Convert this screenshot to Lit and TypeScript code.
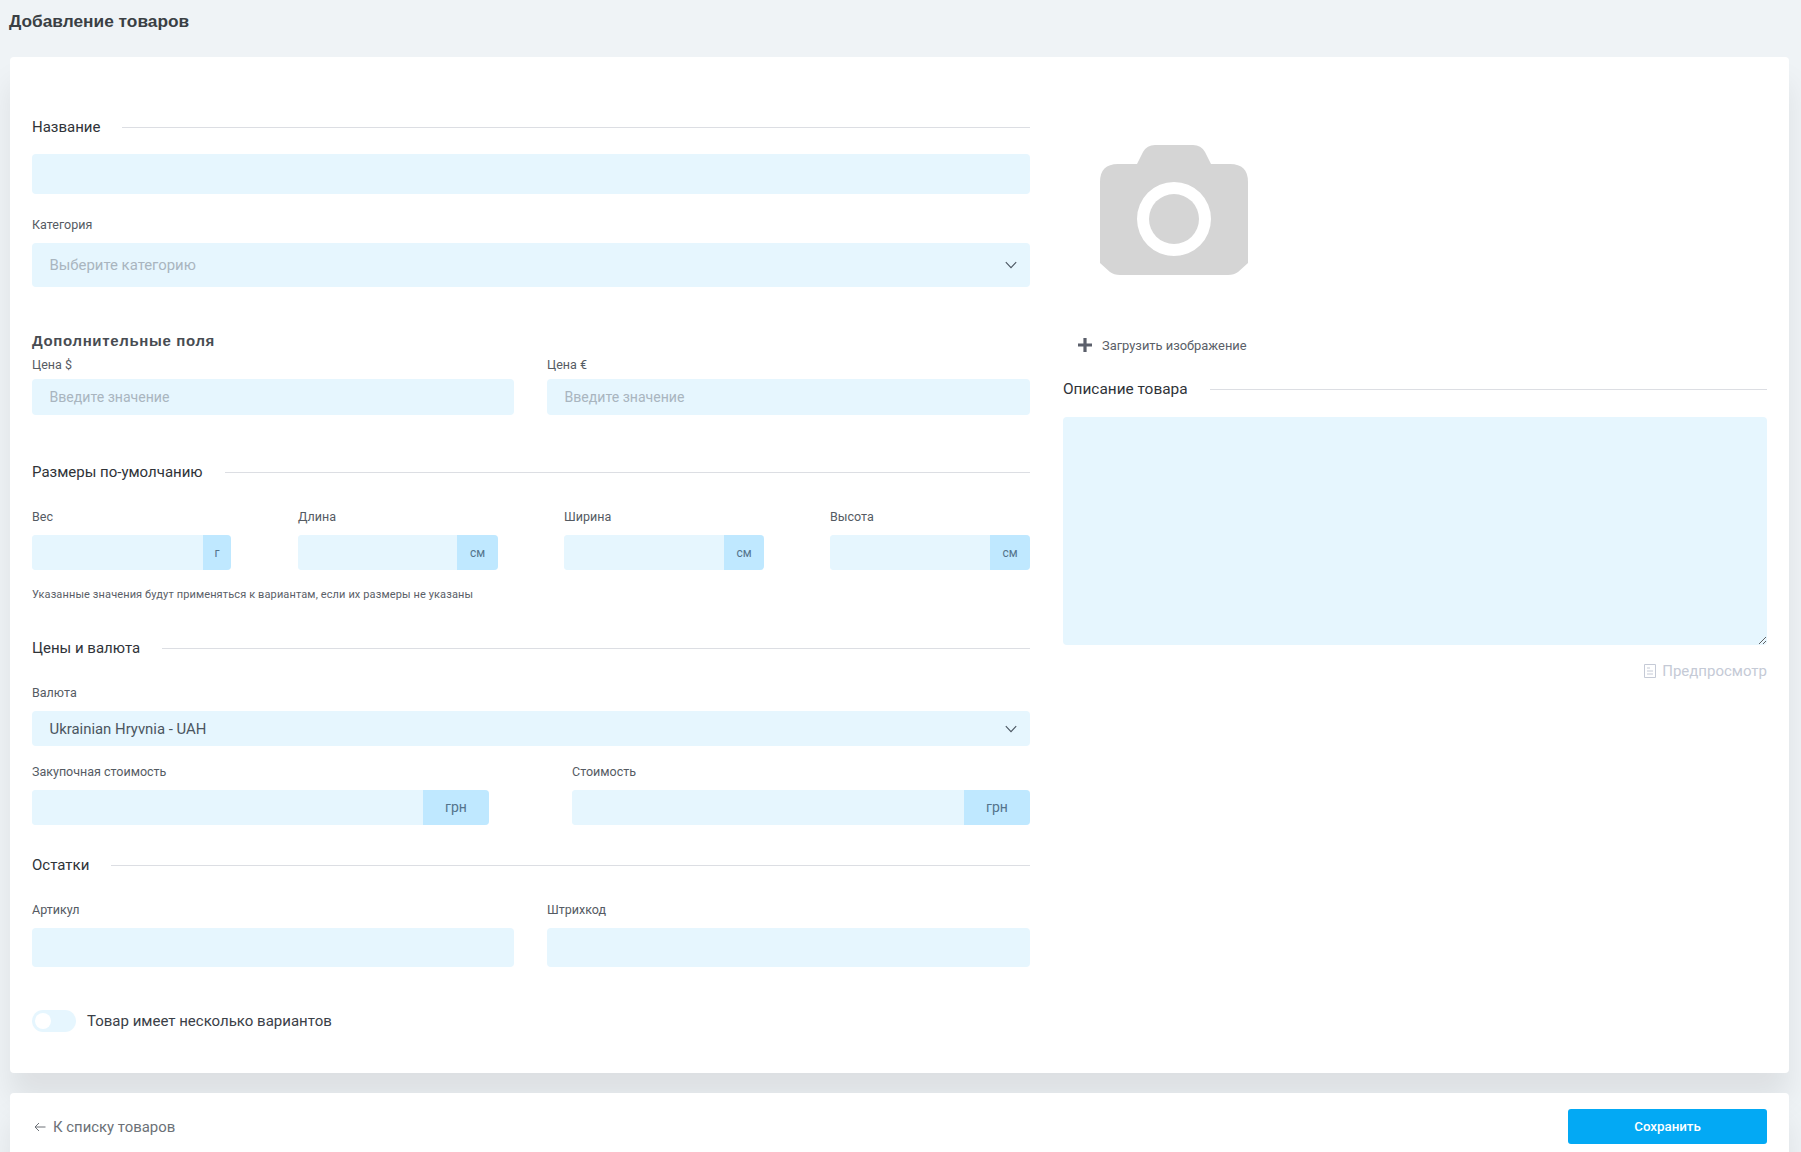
import { LitElement, html, css, svg } from "lit";
import { customElement } from "lit/decorators.js";

const chevron = html`<svg class="chev" width="12" height="8" viewBox="0 0 12 8"><path d="M.8 1.2 6 6.600l5.200-5.400" fill="none" stroke="#4a5560" stroke-width="1.1"/></svg>`;

@customElement("app-root")
export class AppRoot extends LitElement {
  static styles = css`
    :host { display: block; width: 1801px; height: 1152px; overflow: hidden; background: #eff3f6; font-family: Roboto, "Liberation Sans", sans-serif; color: #343a40; }
    * { box-sizing: border-box; }
    .title { height: 57px; margin: 0; padding: 12px 0 0 9px; font: 700 17.300px/19px "Liberation Sans", Arial, sans-serif; color: #3a3f44; }
    .card { margin: 0 12px 20px 10px; background: #fff; border-radius: 4px; box-shadow: 0 26px 30px rgba(0,0,0,.08); }
    .main { height: 1016px; padding: 60px 22px 0; display: flex; gap: 33px; }
    .left { flex: 0 0 998px; display: flex; flex-direction: column; }
    .right { flex: 1; display: flex; flex-direction: column; }
    .heading { display: flex; align-items: center; gap: 22px; height: 20px; font-size: 15px; line-height: 20px; color: #2f3338; white-space: nowrap; }
    .heading::after { content: ""; flex: 1; height: 1px; background: #dcdee3; }
    .label { display: block; height: 16px; font-size: 12.500px; line-height: 16px; color: #555b63; margin-bottom: 11px; }
    input, textarea, .select { display: block; width: 100%; border: 0; outline: 0; background: #e6f6fe; border-radius: 4px; font: 14.100px Roboto, "Liberation Sans", sans-serif; color: #4a5560; padding: 0 17.500px; }
    input::placeholder { color: #a9b5bf; opacity: 1; }
    .select { display: flex; align-items: center; justify-content: space-between; padding-right: 13px; font-size: 14.900px; }
    .select.ph { color: #a9b5bf; }
    .chev { flex: none; }
    .group { display: flex; height: 35px; border-radius: 4px; overflow: hidden; background: #e6f6fe; }
    .group input { flex: 1; min-width: 0; height: 100%; border-radius: 0; }
    .addon { flex: none; background: #bfe8ff; color: #54748c; display: flex; align-items: center; justify-content: center; font-size: 12px; }
    .w28 { width: 28px; } .w41 { width: 41px; } .w40 { width: 40px; }
    .w66 { width: 66px; font-size: 14px; padding-bottom: 2px; }
    .h40 { height: 40px; } .h44 { height: 44px; } .h36 { height: 36px; } .h35 { height: 35px; } .h39 { height: 39px; }
    .bold { font: 700 15px/16px "Liberation Sans", Arial, sans-serif; letter-spacing: .65px; height: 16px; color: #484c52; margin: 46px 0 8px; }
    .two { display: grid; grid-template-columns: 482px 483px; gap: 33px; }
    .two .label { margin-bottom: 6px; }
    .four { display: grid; grid-template-columns: 199px 201px 200px 200px; column-gap: 66px; margin-top: 27px; }
    .four .label { margin-bottom: 10px; }
    .four > :nth-child(2) { margin-left: 1px; }
    .cost { display: grid; grid-template-columns: 457px 458px; gap: 83px; margin-top: 18px; }
    .cost .label { margin-bottom: 10px; }
    .stock { display: grid; grid-template-columns: 482px 483px; gap: 33px; margin-top: 27px; }
    .stock .label { margin-bottom: 10px; }
    .note { font-size: 11px; line-height: 14px; letter-spacing: .12px; color: #5a6068; margin-top: 18px; }
    .toggle-row { display: flex; align-items: center; gap: 11px; margin-top: 43px; height: 22px; font-size: 15px; color: #3a4047; }
    .toggle { width: 44px; height: 22px; border-radius: 11px; background: #e6f6fe; padding: 3px; flex: none; }
    .toggle span { display: block; width: 16px; height: 16px; border-radius: 50%; background: #fff; }
    .camera { display: block; margin: 28px 0 0 37px; }
    .upload { display: flex; align-items: center; margin: 60px 0 0 15px; height: 20px; font-size: 12.900px; color: #5a6068; gap: 10px; }
    .desc-head { font-size: 15.400px; }
    .desc { height: 228px; margin-top: 18px; resize: vertical; }
    .preview { display: flex; justify-content: flex-end; align-items: center; gap: 6px; margin-top: 16px; height: 20px; font-size: 15px; color: #c5cad6; }
    .footer { height: 80px; margin-bottom: 0; padding: 16px 22px; display: flex; justify-content: space-between; align-items: flex-start; }
    .back { display: flex; align-items: center; gap: 7px; height: 35px; padding-left: 2px; font-size: 14.900px; color: #6c7177; }
    button { width: 199px; height: 35px; border: 0; border-radius: 3px; background: #03a9f4; color: #fff; font: 500 13.300px Roboto, "Liberation Sans", sans-serif; }
  `;

  private dim(label: string, unit: string, w: string) {
    return html`<div><label class="label">${label}</label><div class="group"><input /><span class="addon ${w}">${unit}</span></div></div>`;
  }

  render() {
    return html`
      <h1 class="title">Добавление товаров</h1>
      <div class="card main">
        <div class="left">
          <div class="heading">Название</div>
          <input class="h40" style="margin-top:17px" />
          <label class="label" style="margin-top:23px;margin-bottom:10px">Категория</label>
          <div class="select ph h44">Выберите категорию ${chevron}</div>
          <div class="bold">Дополнительные поля</div>
          <div class="two">
            <div><label class="label">Цена $</label><input class="h36" placeholder="Введите значение" /></div>
            <div><label class="label">Цена €</label><input class="h36" placeholder="Введите значение" /></div>
          </div>
          <div class="heading" style="margin-top:47px">Размеры по-умолчанию</div>
          <div class="four">
            ${this.dim("Вес", "г", "w28")}
            ${this.dim("Длина", "см", "w41")}
            ${this.dim("Ширина", "см", "w40")}
            ${this.dim("Высота", "см", "w40")}
          </div>
          <div class="note">Указанные значения будут применяться к вариантам, если их размеры не указаны</div>
          <div class="heading" style="margin-top:36px">Цены и валюта</div>
          <label class="label" style="margin-top:27px;margin-bottom:10px">Валюта</label>
          <div class="select h35">Ukrainian Hryvnia - UAH ${chevron}</div>
          <div class="cost">
            ${this.dim("Закупочная стоимость", "грн", "w66")}
            ${this.dim("Стоимость", "грн", "w66")}
          </div>
          <div class="heading" style="margin-top:30px">Остатки</div>
          <div class="stock">
            <div><label class="label">Артикул</label><input class="h39" /></div>
            <div><label class="label">Штрихкод</label><input class="h39" /></div>
          </div>
          <div class="toggle-row"><div class="toggle"><span></span></div>Товар имеет несколько вариантов</div>
        </div>
        <div class="right">
          <svg class="camera" width="148" height="130" viewBox="0 0 148 130">
            <path fill="#d5d5d5" fill-rule="evenodd" d="M37 19 43 7Q47 0 55 0H93Q101 0 105 7L111 19H130Q148 19 148 37V118L138 127Q134 130 128 130H20Q14 130 10 127L0 118V37Q0 19 18 19ZM74 37A37 37 0 1 0 74 111 37 37 0 1 0 74 37Z"/>
            <circle cx="74" cy="74" r="25" fill="#d5d5d5"/>
          </svg>
          <div class="upload">
            <svg width="14" height="14" viewBox="0 0 14 14"><path d="M5.400 0h3.200v5.400H14v3.200H8.600V14H5.400V8.600H0V5.400H5.400Z" fill="#5b5f6b"/></svg>
            Загрузить изображение
          </div>
          <div class="heading desc-head" style="margin-top:24px">Описание товара</div>
          <textarea class="desc"></textarea>
          <div class="preview">
            <svg width="12" height="14" viewBox="0 0 12 14">${svg`<path d="M.5.5h11v13H.5zM3 4h3M3 7h6M3 10h6" fill="none" stroke="#c5cad6"/>`}</svg>
            Предпросмотр
          </div>
        </div>
      </div>
      <div class="card footer">
        <div class="back">
          <svg width="12" height="10" viewBox="0 0 12 10"><path d="M11.500 5H1M5 1 1 5l4 4" fill="none" stroke="#6c7177" stroke-width="1"/></svg>
          К списку товаров
        </div>
        <button>Сохранить</button>
      </div>
    `;
  }
}
